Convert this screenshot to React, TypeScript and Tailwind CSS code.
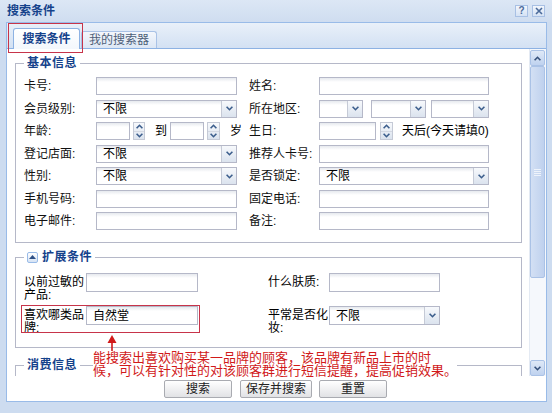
import React from 'react';

const boxCls = "border border-[#b5b8c8] bg-[linear-gradient(#e6e9ee,#fff_4px)]";

function Chevron({ up, color = "#3b5d8c" }: { up?: boolean; color?: string }) {
  return (
    <svg width="7" height="5" viewBox="0 0 7 5">
      <path d={up ? "M0.6 4.3 L3.5 1.3 L6.4 4.3" : "M0.6 0.7 L3.5 3.7 L6.4 0.7"} fill="none" stroke={color} strokeWidth="1.6" />
    </svg>
  );
}

function Input({ className, value }: { className: string; value?: string }) {
  return <div className={`${boxCls} ${className} flex items-center pl-[6px] text-[12px] leading-none`}>{value}</div>;
}

function Select({ className, value }: { className: string; value?: string }) {
  return (
    <div className={`${boxCls} ${className} flex items-stretch text-[12px] leading-none`}>
      <div className="flex-1 flex items-center pl-[6px]">{value}</div>
      <div className="w-[15px] border-l border-[#c5cad6] bg-gradient-to-b from-[#f7f9fc] to-[#dbe3ee] flex items-center justify-center">
        <Chevron />
      </div>
    </div>
  );
}

function Spinner({ inputCls, btnCls }: { inputCls: string; btnCls: string }) {
  return (
    <div className="flex items-stretch h-[18px]">
      <div className={`${boxCls} ${inputCls}`} />
      <div className={`${btnCls} flex flex-col border border-[#c5cad6] bg-gradient-to-b from-[#f7f9fc] to-[#dbe3ee]`}>
        <div className="flex-1 flex items-center justify-center border-b border-[#d3d8e2]"><Chevron up /></div>
        <div className="flex-1 flex items-center justify-center"><Chevron /></div>
      </div>
    </div>
  );
}

function Row({ children }: { children: React.ReactNode }) {
  return <div className="flex items-center h-[18px]">{children}</div>;
}

function Label({ className, children }: { className: string; children: React.ReactNode }) {
  return <div className={`${className} text-[12px] leading-none text-[#111] whitespace-nowrap`}>{children}</div>;
}

function Legend({ children }: { children: React.ReactNode }) {
  return (
    <legend className="px-[3px] h-[16px] flex items-center gap-[4px] text-[12px] font-bold text-[#15428b] tracking-[0.5px] leading-none">
      {children}
    </legend>
  );
}

function ScrollBar() {
  return (
    <div className="w-[17px] flex flex-col bg-[#f5f8fc] border-l border-[#e4eaf3] pt-[1px] pr-[1px]">
      <div className="h-[16px] flex items-center justify-center bg-gradient-to-b from-[#dfe9f7] to-[#bfd2ef] border border-[#aac2e6] rounded-[2px]">
        <Chevron up color="#35507a" />
      </div>
      <div className="h-[212px] flex items-center justify-center bg-gradient-to-r from-[#d3e0f4] to-[#bfd1ee] border border-[#aac2e6] rounded-[2px]">
        <div className="flex flex-col gap-[1px]">
          <div className="w-[7px] h-px bg-[#eef3fb]" />
          <div className="w-[7px] h-px bg-[#eef3fb]" />
          <div className="w-[7px] h-px bg-[#eef3fb]" />
          <div className="w-[7px] h-px bg-[#eef3fb]" />
        </div>
      </div>
      <div className="flex-1" />
      <div className="h-[16px] flex items-center justify-center bg-gradient-to-b from-[#dfe9f7] to-[#bfd2ef] border border-[#aac2e6] rounded-[2px]">
        <Chevron color="#35507a" />
      </div>
    </div>
  );
}

function Button({ className, children }: { className: string; children: React.ReactNode }) {
  return (
    <div className={`${className} h-[18px] flex items-center justify-center rounded-[2px] border border-[#a9abb1] bg-gradient-to-b from-[#ffffff] to-[#e1e2e5] text-[12px] leading-none text-[#222]`}>
      {children}
    </div>
  );
}

export default function App() {
  return (
    <div className="w-[552px] h-[413px] overflow-hidden flex flex-col bg-[#cddcf0] font-['Liberation_Sans','Noto_Sans_CJK_SC',sans-serif] text-[12px]">
      {/* Title bar */}
      <div className="h-[22px] flex items-center justify-between pl-[7px] pr-[7px] bg-gradient-to-b from-[#dce7f5] to-[#cfddf0]">
        <span className="font-bold text-[#15428b] leading-none">搜索条件</span>
        <div className="flex gap-[4px]">
          <div className="w-[13px] h-[12px] flex items-center justify-center border border-[#a8c0e4] bg-gradient-to-b from-[#f2f6fc] to-[#d5e2f4] text-[10px] font-bold text-[#4a6a9a] leading-none">?</div>
          <div className="w-[13px] h-[12px] flex items-center justify-center border border-[#a8c0e4] bg-gradient-to-b from-[#f2f6fc] to-[#d5e2f4]">
            <svg width="8" height="8" viewBox="0 0 8 8"><path d="M1 1 L7 7 M7 1 L1 7" stroke="#4a6a9a" strokeWidth="1.6" /></svg>
          </div>
        </div>
      </div>

      {/* Panel */}
      <div className="relative ml-[6px] mr-[5px] h-[380px] flex flex-col border border-[#99bbe8] bg-white">
        {/* Tab strip */}
        <div className="h-[26px] flex items-end pl-[6px] bg-gradient-to-b from-[#e9f0f9] to-[#d3e1f3] border-b border-[#8db2e3]">
          <div className="w-[67px] h-[21px] -mb-px flex items-center justify-center border border-b-0 border-[#8db2e3] rounded-t-[3px] bg-gradient-to-b from-[#ffffff] to-[#f3f7fc] font-bold text-[#15428b] leading-none">
            搜索条件
          </div>
          <div className="w-[76px] h-[17px] ml-px flex items-center justify-center border border-b-0 border-[#a9c2e6] rounded-t-[3px] bg-gradient-to-b from-[#f4f7fc] to-[#dce7f5] text-[#4e5f78] leading-none">
            我的搜索器
          </div>
        </div>

        {/* Scroll viewport */}
        <div className="h-[327px] flex">
          <div className="flex-1 overflow-hidden pl-[8px] pr-[7px]">
            <fieldset className="mt-[6px] border border-[#b5b8c8] pl-[8px] pt-[6px] pb-[12px]">
              <Legend>基本信息</Legend>
              <div className="flex flex-col gap-[4.5px]">
                <Row>
                  <Label className="w-[72px]">卡号:</Label>
                  <div className="w-[153px]"><Input className="w-[141px] h-[18px]" /></div>
                  <Label className="w-[70px]">姓名:</Label>
                  <Input className="w-[170px] h-[18px]" />
                </Row>
                <Row>
                  <Label className="w-[72px]">会员级别:</Label>
                  <div className="w-[153px]"><Select className="w-[141px] h-[18px]" value="不限" /></div>
                  <Label className="w-[70px]">所在地区:</Label>
                  <div className="flex">
                    <Select className="w-[44px] h-[18px]" />
                    <Select className="w-[55px] h-[18px] ml-[8px]" />
                    <Select className="w-[58px] h-[18px] ml-[5px]" />
                  </div>
                </Row>
                <Row>
                  <Label className="w-[72px]">年龄:</Label>
                  <div className="w-[153px] flex items-center">
                    <Spinner inputCls="w-[34px]" btnCls="w-[12px] ml-[3px]" />
                    <span className="ml-[10px] leading-none">到</span>
                    <span className="ml-[3px]"><Spinner inputCls="w-[34px]" btnCls="w-[13px] ml-[3px]" /></span>
                    <span className="ml-[10px] leading-none">岁</span>
                  </div>
                  <Label className="w-[70px]">生日:</Label>
                  <div className="flex items-center">
                    <Spinner inputCls="w-[57px]" btnCls="w-[13px] ml-[4px]" />
                    <span className="ml-[9px] leading-none">天后(今天请填0)</span>
                  </div>
                </Row>
                <Row>
                  <Label className="w-[72px]">登记店面:</Label>
                  <div className="w-[153px]"><Select className="w-[141px] h-[18px]" value="不限" /></div>
                  <Label className="w-[70px]">推荐人卡号:</Label>
                  <Input className="w-[170px] h-[18px]" />
                </Row>
                <Row>
                  <Label className="w-[72px]">性别:</Label>
                  <div className="w-[153px]"><Select className="w-[141px] h-[18px]" value="不限" /></div>
                  <Label className="w-[70px]">是否锁定:</Label>
                  <Select className="w-[170px] h-[18px]" value="不限" />
                </Row>
                <Row>
                  <Label className="w-[72px]">手机号码:</Label>
                  <div className="w-[153px]"><Input className="w-[141px] h-[18px]" /></div>
                  <Label className="w-[70px]">固定电话:</Label>
                  <Input className="w-[170px] h-[18px]" />
                </Row>
                <Row>
                  <Label className="w-[72px]">电子邮件:</Label>
                  <div className="w-[153px]"><Input className="w-[141px] h-[18px]" /></div>
                  <Label className="w-[70px]">备注:</Label>
                  <Input className="w-[170px] h-[18px]" />
                </Row>
              </div>
            </fieldset>

            <fieldset className="mt-[6px] border border-[#b5b8c8] pl-[8px] pt-[8px] pb-[14px]">
              <Legend>
                <span className="w-[11px] h-[11px] flex items-center justify-center rounded-[2px] border border-[#99bbe8] bg-gradient-to-b from-[#ffffff] to-[#d6e3f4]">
                  <svg width="7" height="4" viewBox="0 0 7 4"><path d="M0 4 L3.5 0 L7 4 Z" fill="#2d4f86" /></svg>
                </span>
                扩展条件
              </Legend>
              <div className="flex flex-col gap-[6px]">
                <div className="flex items-start h-[27px]">
                  <div className="w-[62px] pt-[3px] text-[12px] leading-[13px]">以前过敏的<br />产品:</div>
                  <div className="w-[182px]"><Input className="w-[112px] h-[19px]" /></div>
                  <div className="w-[61px] pt-[3px] text-[12px] leading-[13px]">什么肤质:</div>
                  <Input className="w-[111px] h-[19px]" />
                </div>
                <div className="flex items-start h-[27px]">
                  <div className="w-[62px] pt-[3px] text-[12px] leading-[13px]">喜欢哪类品<br />牌:</div>
                  <div className="w-[182px]"><Input className="w-[112px] h-[19px]" value="自然堂" /></div>
                  <div className="w-[61px] pt-[3px] text-[12px] leading-[13px]">平常是否化<br />妆:</div>
                  <Select className="w-[111px] h-[19px]" value="不限" />
                </div>
              </div>
            </fieldset>

            <fieldset className="mt-[9px] border border-[#b5b8c8] pl-[8px] h-[70px]">
              <Legend>消费信息</Legend>
            </fieldset>
          </div>
          <ScrollBar />
        </div>

        {/* Button bar */}
        <div className="flex-1 flex justify-center items-start pt-[4px] pr-[2px]">
          <Button className="w-[68px]">搜索</Button>
          <Button className="w-[72px] ml-[8px]">保存并搜索</Button>
          <Button className="w-[68px] ml-[7px]">重置</Button>
        </div>

        {/* Annotations drawn over the dialog */}
        <div className="absolute left-[1px] top-0 w-[75px] h-[30px] border-[1.5px] border-[#c7344a]" />
        <div className="absolute left-[14px] top-[282px] w-[179px] h-[28px] border-[1.5px] border-[#c7344a]" />
        <svg className="absolute left-[100px] top-[312px]" width="10" height="18" viewBox="0 0 10 18">
          <path d="M5 0 L9.5 8 L0.5 8 Z" fill="#d11a1a" />
          <path d="M5 7 L5 18" stroke="#d11a1a" strokeWidth="1.6" />
        </svg>
        <div className="absolute left-[86px] top-[328px] bg-white text-[13px] leading-[13px] text-[#d11a1a] whitespace-nowrap">
          能搜索出喜欢购买某一品牌的顾客，该品牌有新品上市的时<br />
          候，可以有针对性的对该顾客群进行短信提醒，提高促销效果。
        </div>
      </div>
    </div>
  );
}
